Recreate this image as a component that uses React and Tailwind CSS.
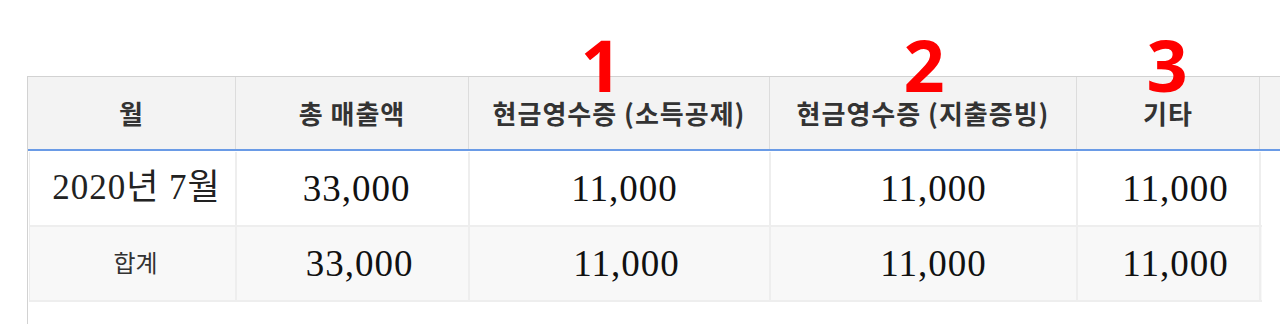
import React from 'react'

const cols = [
  { label: '월', w: 'w-[208px]', pad: 'pl-[8px]' },
  { label: '총 매출액', w: 'w-[233px]', pad: 'pl-[8px]' },
  { label: '현금영수증 (소득공제)', w: 'w-[301px]', pad: 'pl-[10px]' },
  { label: '현금영수증 (지출증빙)', w: 'w-[307px]', pad: 'pl-[20px]' },
  { label: '기타', w: 'w-[183px]', pad: 'pl-[14px]' },
]

const rows = [
  { first: '2020년 7월', values: ['33,000', '11,000', '11,000', '11,000'], bg: 'bg-white', sum: false },
  { first: '합계', values: ['33,000', '11,000', '11,000', '11,000'], bg: 'bg-[#f8f8f8]', sum: true },
]

const serif = "font-['Liberation_Serif','Noto_Sans_CJK_KR',serif]"
const sans = "font-['Noto_Sans_CJK_KR','Noto_Sans',sans-serif]"

export default function App() {
  return (
    <div className="relative w-[1280px] h-[324px] overflow-hidden bg-white pt-[76px] pl-[27px]">
      <div className={`h-full border-l border-t border-[#d2d2d2] ${sans}`}>
        {/* 헤더 */}
        <div className="flex h-[74px] bg-[#f3f3f3] border-b-2 border-[#6a9be6]">
          {cols.map((c) => (
            <div
              key={c.label}
              className={`${c.w} shrink-0 flex items-center justify-center border-r border-[#dcdcdc] text-[26px] tracking-[1px] font-bold text-[#333] pb-[2px]`}
            >
              {c.label}
            </div>
          ))}
          <div className="flex-1" />
        </div>

        {/* 본문 */}
        <div className="pt-[1px] pl-[1px]">
          <div className="w-[1233px] border-l border-[#ececec]">
            {rows.map((r) => (
              <div key={r.first} className={`flex h-[75px] border-b-2 border-[#eeeeee] ${r.bg}`}>
                <div
                  className={`w-[207px] shrink-0 flex items-center justify-center border-r-2 border-[#eeeeee] text-[#222] ${
                    r.sum ? 'text-[24px] pl-[6px] pb-[4px] text-[#333]' : `${serif} text-[35px] tracking-[1px] pl-[8px]`
                  }`}
                >
                  {r.first}
                </div>
                {r.values.map((v, i) => (
                  <div
                    key={i}
                    className={`${cols[i + 1].w} shrink-0 flex items-center justify-center border-r-2 border-[#eeeeee] ${serif} text-[37px] tracking-[1px] text-[#111] ${cols[i + 1].pad} ${
                      r.sum ? 'pl-[14px]' : ''
                    }`}
                  >
                    {v}
                  </div>
                ))}
              </div>
            ))}
          </div>
        </div>
      </div>

      {/* 빨간 번호 표시 */}
      <span className="absolute top-[28px] left-[561px] w-[80px] text-center font-['Open_Sans',sans-serif] font-bold text-[72px] leading-none text-[#ff0000]">1</span>
      <span className="absolute top-[28px] left-[884px] w-[80px] text-center font-['Open_Sans',sans-serif] font-bold text-[72px] leading-none text-[#ff0000]">2</span>
      <span className="absolute top-[28px] left-[1127px] w-[80px] text-center font-['Open_Sans',sans-serif] font-bold text-[72px] leading-none text-[#ff0000]">3</span>
    </div>
  )
}
